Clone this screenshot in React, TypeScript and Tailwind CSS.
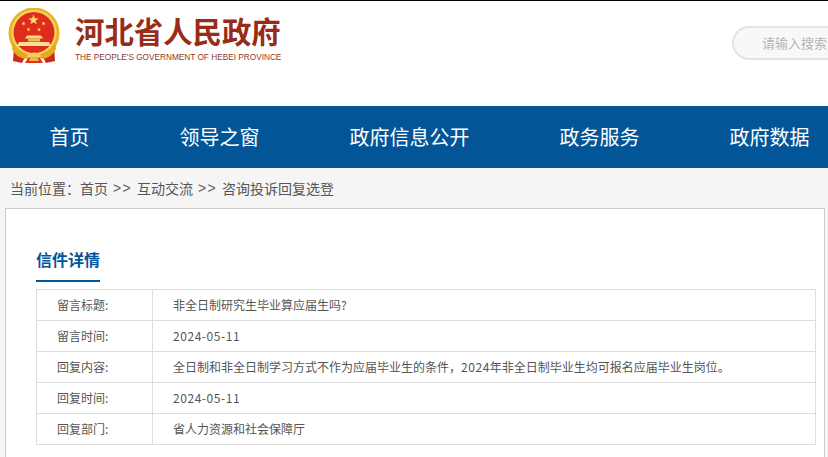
const CJK = "font-['Noto_Sans_CJK_SC','Microsoft_YaHei',sans-serif]";

function Emblem() {
  const star = (cx: number, cy: number, r: number) => {
    const pts: string[] = [];
    for (let i = 0; i < 10; i++) {
      const rad = i % 2 === 0 ? r : r * 0.42;
      const a = (-90 + i * 36) * (Math.PI / 180);
      pts.push(`${cx + rad * Math.cos(a)},${cy + rad * Math.sin(a)}`);
    }
    return pts.join(" ");
  };
  return (
    <svg width="52" height="56" viewBox="0 0 52 56" className="shrink-0">
      <path d="M6 38l-1 15 9 2 3-6zM46 38l1 15-9 2-3-6z" fill="#cf2a1e" />
      <circle cx="26" cy="25" r="25.5" fill="#e9b527" />
      <circle cx="26" cy="24.5" r="22.5" fill="#f5d766" />
      <circle cx="26" cy="24.5" r="20.5" fill="#e02c1c" />
      <polygon points={star(25.5, 12, 5.4)} fill="#f8dc62" />
      <polygon points={star(15.5, 15.5, 2.1)} fill="#f8dc62" />
      <polygon points={star(35.5, 15.5, 2.1)} fill="#f8dc62" />
      <polygon points={star(20.5, 21.5, 2.1)} fill="#f8dc62" />
      <polygon points={star(31, 21.5, 2.1)} fill="#f8dc62" />
      <path d="M19 27.5h14l2 3H17z" fill="#f6dc82" />
      <path d="M20 30.5h12v3H20z" fill="#eabf4a" />
      <path d="M11 34h30l2 4H9z" fill="#f7e08f" />
      <path d="M5 34c4 9 12 13 21 13s17-4 21-13l1 7c-3 6-8 9-13 10-3-1-6-2-9-2s-6 1-9 2c-5-1-10-4-13-10z" fill="#e5a920" />
      <path d="M20 46c4-2 8-2 12 0l1 3h-14z" fill="#f3cf5c" />
      <path d="M20 50h12l3 5H17z" fill="#dd3325" />
      <path d="M22 50h8l1 3h-10z" fill="#eebb3c" />
    </svg>
  );
}

const Num = ({ children }: { children: string }) => <span className="tracking-[0.55px]">{children}</span>;

const rows: [string, React.ReactNode][] = [
  ["留言标题:", "非全日制研究生毕业算应届生吗?"],
  ["留言时间:", <Num>2024-05-11</Num>],
  [
    "回复内容:",
    <>
      {"全日制和非全日制学习方式不作为应届毕业生的条件\uFF0C"}
      <Num>2024</Num>
      {"年非全日制毕业生均可报名应届毕业生岗位\u3002"}
    </>,
  ],
  ["回复时间:", <Num>2024-05-11</Num>],
  ["回复部门:", "省人力资源和社会保障厅"],
];

export default function App() {
  return (
    <div className={`h-[457px] w-[828px] overflow-hidden bg-[#f5f5f5] ${CJK}`}>
      <header className="flex h-[106px] overflow-hidden border-t border-black bg-white">
        <div className="ml-2 mt-[7px] h-fit">
          <Emblem />
        </div>
        <div className="ml-[15px] mt-[11px] h-fit w-[210px] shrink-0">
          <div className="text-[29.4px] font-bold leading-[36px] text-[#982c16]">河北省人民政府</div>
          <div className="mt-[4px] whitespace-nowrap font-['Liberation_Sans',sans-serif] text-[8.25px] leading-[12px] text-[#8e3a28]">
            THE PEOPLE'S GOVERNMENT OF HEBEI PROVINCE
          </div>
        </div>
        <div className="ml-[447px] mt-[25px] flex h-[34px] w-[200px] shrink-0 items-center rounded-l-[17px] border-2 border-r-0 border-[#e3e3e3] bg-[#f8f8f8] pl-[28px] text-[13px] text-[#b5b5b5]">
          <span className="whitespace-nowrap">请输入搜索</span>
        </div>
      </header>

      <nav className="flex h-[62px] items-center gap-[90px] overflow-hidden bg-[#025698] pl-[49.5px] text-[20px] text-white">
        {["首页", "领导之窗", "政府信息公开", "政务服务", "政府数据"].map((t) => (
          <span key={t} className="shrink-0 whitespace-nowrap">
            {t}
          </span>
        ))}
      </nav>

      <div className="flex h-[40px] items-center pl-[10px] text-[14px] text-[#555555]">
        <span>{"当前位置\uFF1A"}</span>
        <span>首页</span>
        <span className="ml-[5px] mr-[6px] w-[18px] font-['Liberation_Sans',sans-serif] tracking-[1.4px] text-[#6b5a50]">&gt;&gt;</span>
        <span>互动交流</span>
        <span className="ml-[5px] mr-[6px] w-[18px] font-['Liberation_Sans',sans-serif] tracking-[1.4px] text-[#6b5a50]">&gt;&gt;</span>
        <span>咨询投诉回复选登</span>
      </div>

      <main className="ml-[5px] h-[300px] w-[820px] border border-[#cccccc] bg-white pl-[30px] pt-[37px]">
        <div className="h-[36px] w-fit border-b-2 border-[#025698] text-[16px] font-bold leading-[26px] text-[#025698]">
          信件详情
        </div>
        <div className="mt-[7px] w-[780px] border-t border-l border-[#dddddd] text-[12px] text-[#555555]">
          {rows.map(([k, v]) => (
            <div key={k} className="flex h-[31px] border-b border-r border-[#dddddd]">
              <div className="flex w-[116px] shrink-0 items-center border-r border-[#dddddd] pl-[20px]">{k}</div>
              <div className="block pl-[20px] leading-[30px] whitespace-nowrap">{v}</div>
            </div>
          ))}
        </div>
      </main>
    </div>
  );
}
